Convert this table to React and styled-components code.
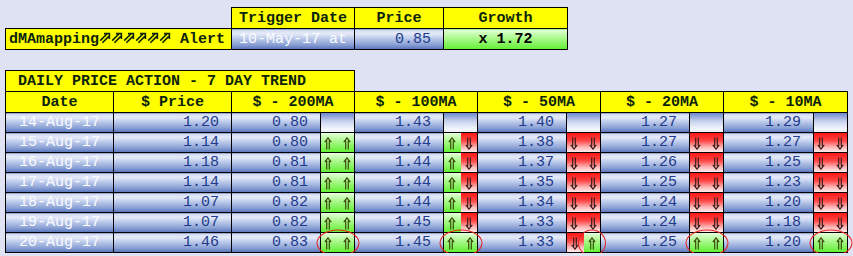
import React from 'react'
import styled, { createGlobalStyle, css } from 'styled-components'

const GlobalStyle = createGlobalStyle`
  body {
    margin: 0;
    padding: 7px 0 0 5px;
    background: #dfe2f3;
    font-family: "Liberation Mono", "Courier New", monospace;
  }
`

const blueFill = 'linear-gradient(#cdd7ef 0%, #e6ebf8 20%, #bac8e9 45%, #8ca2d5 75%, #5673bb 100%)'
const blankFill = 'linear-gradient(#6f8bcd 0%, #c9d4ee 45%, #f4f6fc 85%, #eef1fa 100%)'
const greenFill = 'linear-gradient(#e6ffdc 0%, #aef991 40%, #62ef33 100%)'
const redFill = 'linear-gradient(#ff1717 0%, #ff4444 40%, #ffb8b8 75%, #ffeaea 100%)'

const Table = styled.table`
  border-collapse: collapse;
  table-layout: fixed;
  width: ${p => p.$width}px;
  font-size: 15px;
`

const Row = styled.tr`
  height: ${p => p.$h}px;
`

const Head = styled.td`
  border: 1px solid #000;
  background: #ffff00;
  color: #0c240c;
  font-weight: bold;
  text-align: ${p => p.$align || 'center'};
  padding: ${p => (p.$align === 'left' ? '1px 0 0 12px' : '1px 0 0')};
  white-space: nowrap;
  line-height: 19px;
`

const Gap = styled.td`
  border: none;
  padding: 0;
`

const AlertName = styled.td`
  border: 1px solid #000;
  background: #ffff00;
  color: #0c240c;
  font-weight: bold;
  padding: 1px 0 0 3px;
  white-space: nowrap;
  line-height: 19px;
`

const Flourish = styled.span`
  display: inline-flex;
  vertical-align: -1px;
`

const Value = styled.td`
  border: 1px solid #000;
  background: ${p => (p.$tone === 'green' ? greenFill : blueFill)};
  color: ${p => (p.$light ? '#fbfcff' : '#1e3a8c')};
  font-weight: ${p => (p.$bold ? 'bold' : 'normal')};
  text-align: ${p => p.$align || 'right'};
  padding: ${p => (p.$align ? '1px 0 0' : '1px 12px 0 0')};
  white-space: nowrap;
  line-height: 18px;
  ${p => p.$tone === 'green' && css`color: #000;`}
`

const SignalCell = styled.td`
  border: 1px solid #000;
  padding: 0;
  height: 19px;
`

const Split = styled.div`
  display: flex;
  height: 19px;
`

const fills = { up: greenFill, down: redFill, blank: blankFill }

const Segment = styled.div`
  position: relative;
  flex: 1;
  display: flex;
  align-items: center;
  justify-content: center;
  gap: 11px;
  padding-top: 1px;
  background: ${p => fills[p.$tone]};
`

const Ring = styled.span`
  position: absolute;
  left: 50%;
  top: 50%;
  width: ${p => p.$w}px;
  height: 27px;
  transform: translate(-50%, -50%);
  border: 1px solid #e8231f;
  border-radius: 50%;
  box-sizing: border-box;
  pointer-events: none;
  z-index: 2;
`

const Spacer = styled.div`
  height: 20px;
`

function DoubleArrow({ dir }) {
  const up = dir === 'up'
  return (
    <svg width="8" height="13" viewBox="0 0 8 13" style={{ transform: up ? 'none' : 'scaleY(-1)' }}>
      <path
        d="M0.8 5.2 L4 0.9 L7.2 5.2 M2.7 3.4 V12.5 M5.3 3.4 V12.5"
        fill="none"
        stroke={up ? '#3a4c08' : '#3c1c1c'}
        strokeWidth="1.2"
      />
    </svg>
  )
}

function NorthEast() {
  return (
    <svg width="12" height="12" viewBox="0 0 12 12">
      <path
        d="M5 1.6 H10.4 V7 M1.2 8.6 L7.6 2.2 M3.4 10.8 L9.8 4.4"
        fill="none"
        stroke="#0c240c"
        strokeWidth="1.6"
      />
    </svg>
  )
}

const signals = {
  none: [{ tone: 'blank', arrows: [] }],
  uu: [{ tone: 'up', arrows: ['up', 'up'] }],
  dd: [{ tone: 'down', arrows: ['down', 'down'] }],
  ud: [{ tone: 'up', arrows: ['up'] }, { tone: 'down', arrows: ['down'] }],
  du: [{ tone: 'down', arrows: ['down'] }, { tone: 'up', arrows: ['up'] }],
}

const rows = [
  ['14-Aug-17', '1.20', [['0.80', 'none'], ['1.43', 'none'], ['1.40', 'none'], ['1.27', 'none'], ['1.29', 'none']]],
  ['15-Aug-17', '1.14', [['0.80', 'uu'], ['1.44', 'ud'], ['1.38', 'dd'], ['1.27', 'dd'], ['1.27', 'dd']]],
  ['16-Aug-17', '1.18', [['0.81', 'uu'], ['1.44', 'ud'], ['1.37', 'dd'], ['1.26', 'dd'], ['1.25', 'dd']]],
  ['17-Aug-17', '1.14', [['0.81', 'uu'], ['1.44', 'ud'], ['1.35', 'dd'], ['1.25', 'dd'], ['1.23', 'dd']]],
  ['18-Aug-17', '1.07', [['0.82', 'uu'], ['1.44', 'ud'], ['1.34', 'dd'], ['1.24', 'dd'], ['1.20', 'dd']]],
  ['19-Aug-17', '1.07', [['0.82', 'uu'], ['1.45', 'ud'], ['1.33', 'dd'], ['1.24', 'dd'], ['1.18', 'dd']]],
  ['20-Aug-17', '1.46', [['0.83', 'uu'], ['1.45', 'uu'], ['1.33', 'du'], ['1.25', 'uu'], ['1.20', 'uu']]],
]

const averages = ['200MA', '100MA', '50MA', '20MA', '10MA']
const colWidths = [108, 118, 89, 34, 89, 34, 89, 34, 89, 34, 90, 34]

function Signal({ kind, circled }) {
  const segs = signals[kind]
  return (
    <SignalCell>
      <Split>
        {segs.map((s, i) => (
          <Segment key={i} $tone={s.tone}>
            {s.arrows.map((a, j) => <DoubleArrow key={j} dir={a} />)}
            {circled && i === segs.length - 1 && <Ring $w={segs.length > 1 ? 28 : 43} />}
          </Segment>
        ))}
      </Split>
    </SignalCell>
  )
}

export default function App() {
  return (
    <>
      <GlobalStyle />
      <Table $width={563}>
        <colgroup>
          <col style={{ width: 226 }} />
          <col style={{ width: 123 }} />
          <col style={{ width: 89 }} />
          <col style={{ width: 124 }} />
        </colgroup>
        <tbody>
          <Row $h={21}>
            <Gap />
            <Head>Trigger Date</Head>
            <Head>Price</Head>
            <Head>Growth</Head>
          </Row>
          <Row $h={21}>
            <AlertName>
              dMAmapping
              <Flourish>{[0, 1, 2, 3, 4, 5].map(i => <NorthEast key={i} />)}</Flourish>
              {' '}Alert
            </AlertName>
            <Value $light $align="center">10-May-17 at</Value>
            <Value>0.85</Value>
            <Value $tone="green" $bold $align="center">x 1.72</Value>
          </Row>
        </tbody>
      </Table>
      <Spacer />
      <Table $width={843}>
        <colgroup>
          {colWidths.map((w, i) => <col key={i} style={{ width: w }} />)}
        </colgroup>
        <tbody>
          <Row $h={21}>
            <Head colSpan={4} $align="left">DAILY PRICE ACTION - 7 DAY TREND</Head>
            <Gap colSpan={8} />
          </Row>
          <Row $h={21}>
            <Head>Date</Head>
            <Head>$ Price</Head>
            {averages.map(a => <Head key={a} colSpan={2}>$ - {a}</Head>)}
          </Row>
          {rows.map(([date, price, mas], r) => (
            <Row key={date} $h={20}>
              <Value $light $align="center">{date}</Value>
              <Value>{price}</Value>
              {mas.map(([v, sig], i) => (
                <React.Fragment key={i}>
                  <Value>{v}</Value>
                  <Signal kind={sig} circled={r === rows.length - 1} />
                </React.Fragment>
              ))}
            </Row>
          ))}
        </tbody>
      </Table>
    </>
  )
}
